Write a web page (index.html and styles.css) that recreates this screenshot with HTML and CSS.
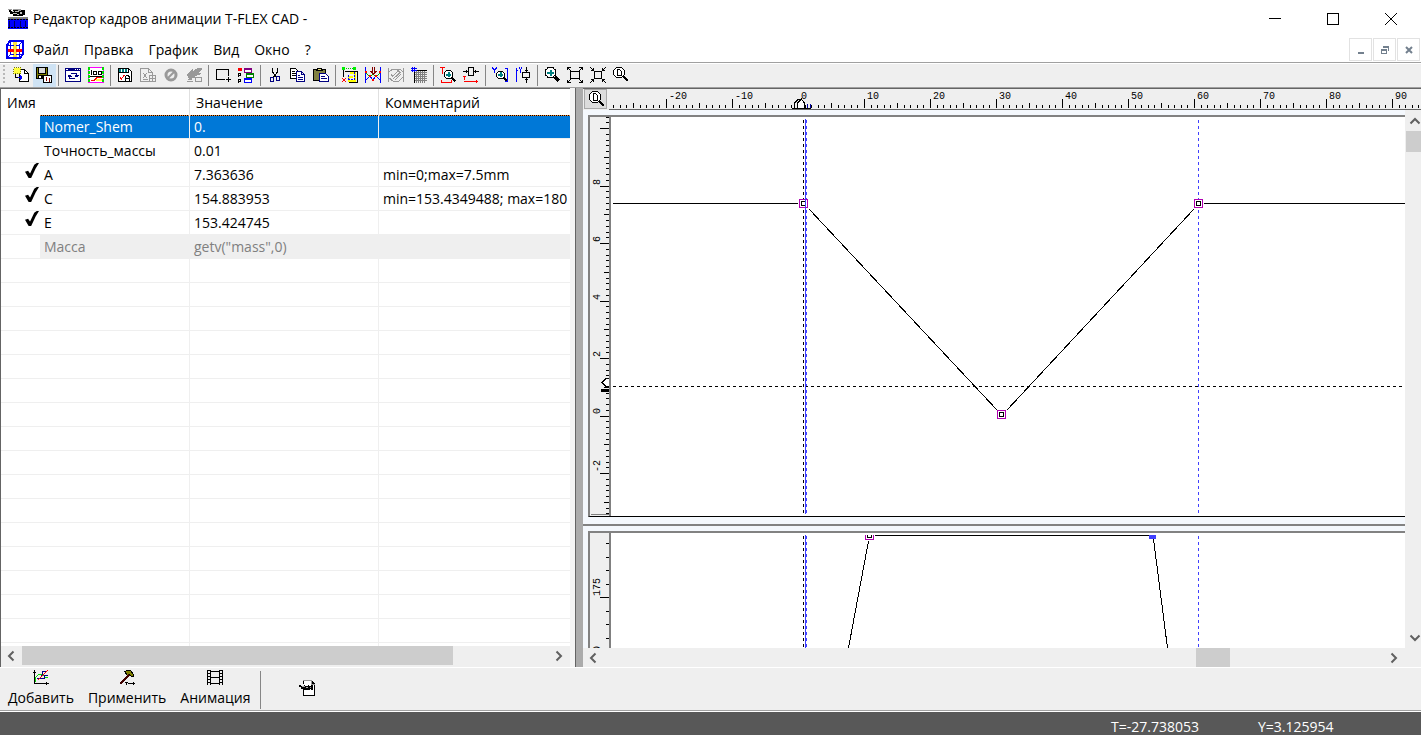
FILE: index.html
```html
<!DOCTYPE html>
<html lang="ru">
<head>
  <meta charset="utf-8">
  <title>Редактор кадров анимации T-FLEX CAD -</title>
  <link rel="stylesheet" href="styles.css">
</head>
<body>
  <header class="titlebar">
    <svg class="app-icon" width="20" height="20" viewBox="0 0 20 20">
      <path fill="#a0a0a0" d="M0 0h4v1h-4zM5 0h8v2h-8z"/>
      <path fill="#000" d="M1 1h2v1h2v-1h5v1h3v-1h4v5h-2v1h-10v-2h-3v-2h-1z"/>
      <path fill="#c0c0c0" d="M4 2h2v1h-2zM7 2h4v1h-4zM12 3h2v2h-2zM5 4h4v1h-4zM9 5h2v1h-2z"/>
      <path fill="#808080" d="M0 8h20v3h-20z"/>
      <path fill="#0000ff" d="M0 10h20v10h-20z"/>
      <path stroke="#000" stroke-dasharray="2 1" d="M0 10.5h20M0 18.5h20"/>
      <path stroke="#000060" d="M1.5 12v6M6.500 12v6M12.500 12v6M17.500 12v6"/>
    </svg>
    <h1>Редактор кадров анимации T-FLEX CAD -</h1>
    <div class="window-controls">
      <button aria-label="Свернуть"><svg width="12" height="12"><path stroke="#000" d="M0 5.5h12"/></svg></button>
      <button aria-label="Развернуть"><svg width="12" height="12"><path fill="none" stroke="#000" d="M.5.5h11v11h-11z"/></svg></button>
      <button aria-label="Закрыть"><svg class="smooth" width="12" height="12"><path stroke="#000" d="M0 0l12 12M12 0l-12 12"/></svg></button>
    </div>
  </header>

  <nav class="menubar">
    <svg class="doc-icon" width="18" height="20" viewBox="0 0 18 20">
      <path fill="#fff" d="M2 2h14v16h-14z"/>
      <path fill="#ffe040" d="M7 0h4v20h-4z"/>
      <path fill="none" stroke="#0000f0" stroke-width="2" d="M4 1h13v13l-3 4h-13v-13z"/>
      <path fill="none" stroke="#0000f0" d="M1 5.500h12.500v12M13 5l3-3M4.500 2v12h12M2 17l3-3"/>
      <path fill="#f00" d="M2 9h14v3h-14z"/>
      <path fill="#ffe040" d="M8 3h2v14h-2z"/>
    </svg>
    <button>Файл</button>
    <button>Правка</button>
    <button>График</button>
    <button>Вид</button>
    <button>Окно</button>
    <button>?</button>
    <div class="child-controls">
      <button aria-label="Свернуть окно"><svg width="10" height="10"><path fill="#73808e" d="M2 7h6v2h-6z"/></svg></button>
      <button aria-label="Восстановить окно"><svg width="10" height="10"><path fill="#73808e" d="M3 1h6v5h-1v-3h-5zM1 4h6v5h-6zM2 6v2h4v-2z" fill-rule="evenodd"/></svg></button>
      <button aria-label="Закрыть окно"><svg class="smooth" width="10" height="10"><path stroke="#73808e" stroke-width="2" d="M2 2l6 6M8 2l-6 6"/></svg></button>
    </div>
  </nav>

  <div class="toolbar" role="toolbar" aria-label="Панель инструментов">
    <span class="grip"></span>
    <button aria-label="Импорт"><svg width="16" height="16">
      <path fill="#fff" stroke="#000" d="M6.500 2.500h5l4 4v8h-9z"/><path fill="none" stroke="#000" d="M11.500 2.500v4h4"/>
      <path fill="#ffff40" d="M1 1h7v6h-7z"/><path fill="none" stroke="#808000" stroke-dasharray="1 1" d="M.5.500h7v6h-7z"/>
      <path fill="none" stroke="#000" d="M2.500 7v3h2"/><path fill="none" stroke="#00f" d="M5 10.500h4M7.500 8v5M8.500 9v3"/></svg></button>
    <button class="active" aria-label="Сохранить"><svg width="16" height="16">
      <path d="M0 0h12v12h-12z"/><path fill="#808000" d="M1 1h1v10h-1zM10 1h1v7h-1zM2 7h8v1h-8z"/><path fill="#d8d8d8" d="M3 1h6v5h-6z"/><path fill="#fff" d="M3 9h2v2h-2z"/>
      <path fill="#fff" stroke="#000" d="M7.500 8.500h8v7h-8z"/><path stroke="#800000" d="M10.500 10v4M13.500 11v4"/></svg></button>
    <i class="sep"></i>
    <button aria-label="Обновить окно"><svg width="16" height="16">
      <path fill="#fff" stroke="#000080" d="M.5 1.500h15v13h-15z"/><path fill="#000080" d="M0 1h16v3h-16z"/><path fill="#fff" d="M1 2h2v1h-2zM10 2h1v1h-1zM12 2h1v1h-1zM14 2h1v1h-1z"/>
      <path fill="none" stroke="#000080" d="M6 6.500h5.500v3M4.500 8v3.500h5.500M9.500 8.500h4M2.500 9.500h4M10 9.500h3M3 8.500h3"/></svg></button>
    <button aria-label="Окно графика"><svg width="16" height="16">
      <path fill="#fff" stroke="#f0f" d="M.5.500h15v15h-15z"/><path stroke="#0d0" stroke-width="2" stroke-dasharray="3 1" d="M1 0v16M15 0v16"/>
      <path fill="none" stroke="#000" d="M3.500 3v5M5.500 4.500h3v3h-3zM10.500 4.500h3v3h-3zM2 9.500h12"/><path fill="#ffff40" d="M8 12h6v2h-6z"/><path fill="none" stroke="#f00" d="M3 13.500h3l3-3h5"/></svg></button>
    <i class="sep"></i>
    <button aria-label="Свойства"><svg width="16" height="16">
      <path fill="#fff" stroke="#000" d="M1.500 1.500h10l3 3v10h-13z"/><path fill="#008080" d="M2 2h8v3h-8z"/><path stroke="#fff" d="M4.500 2v3M7.500 2v3"/>
      <path fill="none" stroke="#000" d="M2 5.500h9v-4M8.500 14v-4l1.500-2h1l1.500 2v4M9 11.500h3"/><path fill="none" stroke="#f00" d="M3 10l1.500 2l3-4"/></svg></button>
    <button disabled aria-label="Новый график"><svg width="16" height="16">
      <path fill="none" stroke="#999" d="M.5 14.500v-13h8l4 4v3M8.500 1.500v4h4M.5 14.500h8M3 6l4 5M7 6l-4 5M3 12.500h5M9 11.500h6M12.500 9v5M9.500 8.500h6v6h-6z"/></svg></button>
    <button disabled aria-label="Отменить"><svg class="smooth" width="16" height="16">
      <circle cx="8" cy="8" r="5" fill="none" stroke="#999" stroke-width="3"/><path stroke="#999" stroke-width="2" d="M4 12l8-8"/></svg></button>
    <button disabled aria-label="Записать"><svg width="16" height="16">
      <path fill="#999" d="M1 7l6-5v2l5-3h4v2l-4 3h3v1l-6 2v2h-3v2h-3v-2h-1v-1z"/><path fill="none" stroke="#999" d="M9.500 10.500h6v4h-6zM1 14.500h6M2 12.500h4"/></svg></button>
    <i class="sep"></i>
    <button aria-label="Рамка"><svg width="16" height="16"><path fill="none" stroke="#000" d="M13.500 9v-6.500h-12v10h8M11 12.500h5M13.500 10v5"/></svg></button>
    <button aria-label="Список окон"><svg width="16" height="16">
      <path fill="#f00" d="M0 1h4v3h-4z"/><path fill="none" stroke="#000" d="M.5 10v-4h2v2h-2M.5 16v-4h2v2h-2"/>
      <path fill="#fff" stroke="#800080" d="M6.500 1.500h7v4h-7z"/><path fill="#fff" stroke="#008000" d="M8.500 6.500h7v4h-7z"/><path fill="#fff" stroke="#00f" d="M6.500 11.500h7v4h-7z"/>
      <path stroke="#800080" d="M6 2.500h8"/><path stroke="#008000" d="M8 7.500h8"/><path stroke="#00f" d="M6 12.500h8"/></svg></button>
    <i class="sep"></i>
    <button aria-label="Вырезать"><svg width="16" height="16">
      <path fill="none" stroke="#000" d="M5.500 1v4l4 5M10.500 1v4l-4 5"/><path fill="none" stroke="#000080" d="M3.500 10.500h3v4h-3zM9.500 9.500h3v4h-3z"/></svg></button>
    <button aria-label="Копировать"><svg width="16" height="16">
      <path fill="#fff" stroke="#000" d="M.5 1.500h5l3 3v7h-8z"/><path stroke="#000" d="M2 4.500h3M2 6.500h5M2 8.500h5"/>
      <path fill="#fff" stroke="#000080" d="M6.500 4.500h5l3 3v7h-8zM11.500 4.500v3h3"/><path stroke="#000080" d="M8 8.500h2M8 10.500h5M8 12.500h5"/></svg></button>
    <button aria-label="Вставить"><svg width="16" height="16">
      <path fill="#808040" stroke="#000" d="M.5 2.500h12v11h-12z"/><path fill="#e8e080" stroke="#000" d="M3.500 3.500h6v-1h-1v-1h-4v1h-1z"/>
      <path fill="#fff" stroke="#000080" d="M6.500 6.500h6l3 3v5h-9z"/><path stroke="#000080" d="M8 9.500h4M8 11.500h6"/></svg></button>
    <i class="sep"></i>
    <button aria-label="Узлы"><svg width="16" height="16">
      <path fill="none" stroke="#0c0" stroke-dasharray="1 1" d="M2 1.500h11"/><path fill="none" stroke="#000" d="M1.500 3v7M3 4.500h12.500v11h-9"/><path fill="none" stroke="#ff0" stroke-width="2" d="M8 6h5v8h-6v-4h4"/>
      <path fill="#0e0" d="M0 0h3v3h-3zM11 0h3v3h-3z"/><path fill="none" stroke="#00f" stroke-dasharray="2 1" d="M12.500 5v7h-6v-5"/>
      <path fill="none" stroke="#f00" d="M0 11l4 4M4 11l-4 4"/></svg></button>
    <button aria-label="Кривые"><svg width="16" height="16">
      <path fill="none" stroke="#0a0" d="M1 6l4 4l3-3l3 3l4-4"/><path fill="none" stroke="#00f" d="M1 13l4-4l3 4l3-4l4 4"/>
      <path stroke="#00f" d="M.5 0v16M15.500 0v16"/><path fill="none" stroke="#800000" d="M7.500 0v5M9.500 0v5M5.500 4l3 3l3-3"/><path fill="#f00" d="M0 4h2v2h-2zM4 8h2v2h-2zM10 8h2v2h-2zM14 4h2v2h-2zM7 12h2v2h-2z"/></svg></button>
    <button disabled aria-label="Сгладить"><svg width="16" height="16">
      <path fill="none" stroke="#999" d="M.5 1v14M15.500 1v14M1 5l4-3h7l3 3M1 11l4 3h6l4-4M4 10l7-7M5 12l8-7M7 13l6-6M3 7l2 3M9 3l4 3"/></svg></button>
    <button aria-label="Сетка"><svg width="16" height="16">
      <path stroke="#808080" d="M5.500 4v12M7.500 4v12M9.500 4v12M11.500 4v12M13.500 4v12M3 5.500h13M3 7.500h13M3 9.500h13M3 11.500h13M3 13.500h13"/>
      <path stroke="#000" d="M5 3.500h11M3.500 5v11"/><path stroke="#00f" d="M0 1.500h6M0 3.500h6M1.500 0v5M3.500 0v5"/></svg></button>
    <i class="sep"></i>
    <button aria-label="Масштаб по T"><svg width="16" height="16">
      <path stroke="#f00" d="M0 .5h5M2.500 0v7M2 15.500h9M1.500 13v3M11.500 13v3"/>
      <path fill="#fff" stroke="#000" d="M6.500 3.500h4l2 2v4l-2 2h-4l-2-2v-4z"/><path stroke="#008080" stroke-width="2" d="M8.500 5v5M6 7.500h5"/><path stroke="#000" stroke-width="2" d="M12 11l3.500 3.500"/></svg></button>
    <button aria-label="Сдвиг по T"><svg width="16" height="16">
      <path fill="none" stroke="#000" d="M0 4.500h5M11 4.500h5M5.500.500h5v8h-5zM3.500 3v3M12.500 3v3"/><path stroke="#f00" d="M0 9.500h3M1.500 9v4M1 14.500h14M13.500 13v3"/></svg></button>
    <i class="sep"></i>
    <button aria-label="Масштаб по Y"><svg width="16" height="16">
      <path fill="none" stroke="#00f" d="M.5 0v1l2 2l2-2v-1M2.500 3v3M13 1.500h2.500v13M13 14.500h3"/>
      <path fill="#fff" stroke="#000" d="M6.500 4.500h4l2 2v3l-2 2h-4l-2-2v-3z"/><path stroke="#008080" stroke-width="2" d="M8.500 5v5M6 7.500h5"/><path stroke="#000" stroke-width="2" d="M12 11l3 3"/></svg></button>
    <button aria-label="Сдвиг по Y"><svg width="16" height="16">
      <path fill="none" stroke="#00f" d="M1.500 1v14M.5 3.500h2M4.500 0v1l1 2l1-2v-1M5.500 3v3"/><path fill="none" stroke="#000" d="M11.500 0v5M11.500 11v5M7.500 5.500h7v5h-7zM10 3.500h3M10 12.500h3"/></svg></button>
    <i class="sep"></i>
    <button aria-label="Увеличить"><svg width="16" height="16">
      <path fill="#fff" stroke="#000" d="M4.500.500h4l3 3v4l-3 3h-4l-3-3v-4z"/><path fill="none" stroke="#000" d="M1.500 2v7M3 .5h7M11.500 2v7M3 10.500h7"/><path stroke="#008080" stroke-width="2" d="M6.500 3v6M3 6h7"/><path stroke="#000" stroke-width="3" d="M11 10l4 4"/></svg></button>
    <button aria-label="Показать всё"><svg width="16" height="16">
      <path fill="none" stroke="#000" d="M3.500 4.500h9v7h-9zM0 .5h4M.5 0v3M12 .5h4M15.500 0v3M0 15.500h4M.5 13v3M12 15.500h4M15.500 13v3M0 0l4 4M16 0l-4 4M0 16l4-4M16 16l-4-4"/></svg></button>
    <button aria-label="Сжать"><svg width="16" height="16">
      <path fill="none" stroke="#000" d="M4.500 4.500h7v7h-7zM0 0l4 4M16 0l-4 4M0 16l4-4M16 16l-4-4M1 3.500h3M3.500 1v3M12 3.500h3M12.500 1v3M1 12.500h3M3.500 12v3M12 12.500h3M12.500 12v3"/></svg></button>
    <button aria-label="Показать страницу"><svg width="16" height="16">
      <path fill="#fff" stroke="#000" d="M3.500.500h5l3 3v4l-3 3h-5l-3-3v-4z"/><path fill="none" stroke="#000" d="M4.500 2.500h2l2 2v4h-4z"/><path stroke="#000" stroke-width="2" d="M10 9l5 5"/></svg></button>
  </div>

  <main class="workspace">
    <section class="variables">
      <div class="grid-scroll">
        <table>
          <colgroup><col class="col-mark"><col class="col-name"><col class="col-value"><col></colgroup>
          <thead>
            <tr><th colspan="2">Имя</th><th>Значение</th><th>Комментарий</th></tr>
          </thead>
          <tbody>
            <tr class="selected"><td></td><td>Nomer_Shem</td><td>0.</td><td></td></tr>
            <tr><td></td><td>Точность_массы</td><td>0.01</td><td></td></tr>
            <tr><td><input type="checkbox" id="var-a" checked></td><td><label for="var-a">A</label></td><td>7.363636</td><td>min=0;max=7.5mm</td></tr>
            <tr><td><input type="checkbox" id="var-c" checked></td><td><label for="var-c">C</label></td><td>154.883953</td><td>min=153.4349488; max=180</td></tr>
            <tr><td><input type="checkbox" id="var-e" checked></td><td><label for="var-e">E</label></td><td>153.424745</td><td></td></tr>
            <tr class="readonly"><td></td><td>Масса</td><td>getv("mass",0)</td><td></td></tr>
            <tr><td></td><td></td><td></td><td></td></tr>
            <tr><td></td><td></td><td></td><td></td></tr>
            <tr><td></td><td></td><td></td><td></td></tr>
            <tr><td></td><td></td><td></td><td></td></tr>
            <tr><td></td><td></td><td></td><td></td></tr>
            <tr><td></td><td></td><td></td><td></td></tr>
            <tr><td></td><td></td><td></td><td></td></tr>
            <tr><td></td><td></td><td></td><td></td></tr>
            <tr><td></td><td></td><td></td><td></td></tr>
            <tr><td></td><td></td><td></td><td></td></tr>
            <tr><td></td><td></td><td></td><td></td></tr>
            <tr><td></td><td></td><td></td><td></td></tr>
            <tr><td></td><td></td><td></td><td></td></tr>
            <tr><td></td><td></td><td></td><td></td></tr>
            <tr><td></td><td></td><td></td><td></td></tr>
            <tr><td></td><td></td><td></td><td></td></tr>
            <tr class="filler"><td></td><td></td><td></td><td></td></tr>
          </tbody>
        </table>
      </div>
      <div class="scroll-x">
        <button aria-label="Влево"><svg class="smooth" width="8" height="12"><path class="arrow" d="M6.500 1.500l-4.500 4.500l4.500 4.500"/></svg></button>
        <div class="track"><div class="thumb"></div></div>
        <button aria-label="Вправо"><svg class="smooth" width="8" height="12"><path class="arrow" d="M1.500 1.500l4.500 4.500l-4.500 4.500"/></svg></button>
      </div>
    </section>

    <div class="splitter"></div>

    <section class="graphs">
      <div class="time-row">
        <button class="fit" aria-label="Показать всё"><svg width="18" height="18">
          <path fill="#fff" stroke="#000" d="M5.500 1.500h5l3 3v5l-3 3h-5l-3-3v-5z"/><path fill="none" stroke="#000" d="M6.500 3.500h2l2 2v5h-4z"/><path stroke="#000" stroke-width="2" d="M12 11l5 5"/></svg></button>
        <svg class="time-ruler">
          <defs>
            <pattern id="time-ticks" x="57" y="0" width="66" height="19" patternUnits="userSpaceOnUse">
              <path d="M0 10h1v9h-1zM33 14h1v5h-1zM7 16h1v3h-1zM13 16h1v3h-1zM20 16h1v3h-1zM26 16h1v3h-1zM40 16h1v3h-1zM46 16h1v3h-1zM53 16h1v3h-1zM59 16h1v3h-1z"/>
            </pattern>
          </defs>
          <rect width="100%" height="19" fill="url(#time-ticks)"/>
          <g class="ruler-text">
            <text x="60" y="10">-20</text>
            <text x="126" y="10">-10</text>
            <text x="192" y="10">0</text>
            <text x="258" y="10">10</text>
            <text x="324" y="10">20</text>
            <text x="390" y="10">30</text>
            <text x="456" y="10">40</text>
            <text x="522" y="10">50</text>
            <text x="588" y="10">60</text>
            <text x="654" y="10">70</text>
            <text x="720" y="10">80</text>
            <text x="786" y="10">90</text>
          </g>
          <path fill="#efefef" stroke="#000" d="M185.500 19v-5l4-4h2l4 4v5z"/>
          <path fill="#fff" stroke="#000" d="M188.500 20v-6l4-4l3 4v6z"/>
          <path stroke="#0000a0" d="M198.500 15v4M201.500 15v4"/>
          <path stroke="#000" d="M183 19.500h19"/>
        </svg>
      </div>
      <div class="graph-body">
        <div class="graph-list">
          <div class="graph graph-a">
            <svg class="value-ruler">
              <defs>
                <pattern id="value-ticks" x="0" y="11" width="19" height="115" patternUnits="userSpaceOnUse">
                  <path d="M10 0h9v1h-9zM10 58h9v1h-9zM14 29h5v1h-5zM14 86h5v1h-5z"/>
                  <path d="M16 6h3v1h-3zM16 12h3v1h-3zM16 17h3v1h-3zM16 23h3v1h-3zM16 35h3v1h-3zM16 40h3v1h-3zM16 46h3v1h-3zM16 52h3v1h-3zM16 63h3v1h-3zM16 69h3v1h-3zM16 75h3v1h-3zM16 81h3v1h-3zM16 92h3v1h-3zM16 98h3v1h-3zM16 104h3v1h-3zM16 109h3v1h-3z"/>
                </pattern>
              </defs>
              <rect width="19" height="397" fill="url(#value-ticks)"/>
              <path fill="none" stroke="#808080" d="M1 397.500h18"/>
              <g class="ruler-text">
                <text transform="translate(10 68) rotate(-90)">8</text>
                <text transform="translate(10 125) rotate(-90)">6</text>
                <text transform="translate(10 183) rotate(-90)">4</text>
                <text transform="translate(10 240) rotate(-90)">2</text>
                <text transform="translate(10 297) rotate(-90)">0</text>
                <text transform="translate(10 355) rotate(-90)">-2</text>
              </g>
              <path fill="#fff" stroke="#000" d="M19 261.500h-3l-4 4l4 4h3"/>
              <path d="M11 272h10v3h-10z"/>
            </svg>
            <svg class="plot">
              <path class="cursor" d="M192.500 3v394"/>
              <path class="frame dashed" d="M195.500 3v394M587.500 3v394"/>
              <line class="cursor" x1="2" y1="269.500" x2="100%" y2="269.500"/>
              <path class="curve" d="M2 86.500h185M198 92l188 201M396 293l187-201"/>
              <line class="curve" x1="593" y1="86.500" x2="100%" y2="86.500"/>
              <path class="node" d="M188.500 82.500h8v8h-8zM386.500 293.500h8v8h-8zM583.500 82.500h8v8h-8z"/>
              <path class="node-core" d="M190.500 84.500h4v4h-4zM388.500 295.500h4v4h-4zM585.500 84.500h4v4h-4z"/>
              <path class="frame" d="M194.500 2v395"/>
            </svg>
          </div>
          <div class="graph graph-c">
            <svg class="value-ruler">
              <defs>
                <pattern id="fine-ticks" x="0" y="10" width="19" height="27" patternUnits="userSpaceOnUse">
                  <path d="M16 0h3v1h-3zM16 14h3v1h-3z"/>
                </pattern>
              </defs>
              <rect width="19" height="100%" fill="url(#fine-ticks)"/>
              <path d="M10 64h9v1h-9z"/>
              <g class="ruler-text">
                <text transform="translate(10 63) rotate(-90)">175</text>
                <text transform="translate(10 131) rotate(-90)">170</text>
              </g>
            </svg>
            <svg class="plot">
              <path class="cursor" d="M192.500 3v112"/>
              <path class="frame dashed" d="M195.500 3v112M587.500 3v112"/>
              <path class="frame" d="M194.500 2v113"/>
              <path class="curve" d="M264 2.500h274M257.500 8l-20 107M542.500 6l14 109"/>
              <path class="node" d="M254.500 2v4.500h8v-4.500"/>
              <path class="node-core" d="M256.500 2v2.500h4v-2.500"/>
              <path fill="#4040ff" d="M538 2h7v4h-7z"/>
            </svg>
          </div>
        </div>
        <div class="scroll-y">
          <button aria-label="Вверх"><svg class="smooth" width="12" height="8"><path class="arrow" d="M1.500 6.500l4.500-4.500l4.500 4.500"/></svg></button>
          <div class="track"><div class="thumb"></div></div>
          <button aria-label="Вниз"><svg class="smooth" width="12" height="8"><path class="arrow" d="M1.500 1.500l4.500 4.500l4.500-4.500"/></svg></button>
        </div>
      </div>
      <div class="scroll-x">
        <button aria-label="Влево"><svg class="smooth" width="8" height="12"><path class="arrow" d="M6.500 1.500l-4.500 4.500l4.500 4.500"/></svg></button>
        <div class="track"><div class="thumb"></div></div>
        <button aria-label="Вправо"><svg class="smooth" width="8" height="12"><path class="arrow" d="M1.500 1.500l4.500 4.500l-4.500 4.500"/></svg></button>
      </div>
    </section>
  </main>

  <div class="actions">
    <button><svg width="16" height="16">
      <path fill="none" stroke="#000" d="M1.500 0v13.500h14M0 2.500h3M13.500 12v3"/><path fill="none" stroke="#0d0" d="M2 12l1-5l3-3h3l3 3h3"/>
      <path fill="none" stroke="#000080" d="M4 8.500h3l2-3l1-4h4M8 8l3 1l1-4h3"/><path stroke="#f00" d="M5 10l10-10"/></svg>Добавить</button>
    <button><svg width="16" height="16">
      <path fill="#808000" stroke="#000" d="M5.500 1.500l3-1h3l3 4v2h-2l-2-2l-2 1z"/><path stroke="#400000" stroke-width="2" d="M1 14l9-9"/>
      <path fill="none" stroke="#000" d="M6 12.500h3M7.500 12v3M9 13.500h7M14.500 12v3"/></svg>Применить</button>
    <button><svg width="16" height="16">
      <path fill="none" stroke="#000" d="M.5 0v15M3.500 0v15M12.500 0v15M15.500 0v15M3 1.500h10M3 7.500h10M3 13.500h10"/>
      <path stroke="#000" stroke-dasharray="1 2" stroke-width="2" d="M2 0v15M14 0v15"/></svg>Анимация</button>
    <i class="divider"></i>
    <button class="record" aria-label="Запись анимации"><svg width="16" height="16">
      <path fill="#fff" stroke="#000" d="M4.500 9v6.500h11v-12l-3-3h-8v3"/><path stroke="#999" d="M4 .5h9M12.500 1v3h3"/>
      <path d="M0 5h2v1h3v-1h1v1h3v-1h1v1h2v-1h2v5h-2v-1h-1v1h-6v-1h-3v-2h-2z"/><path fill="#aaa" d="M3 6h3v1h-3zM7 7h2v1h-2zM11 7h1v1h-1z"/></svg></button>
  </div>

  <footer class="statusbar">
    <span class="coord-t">T=-27.738053</span>
    <span class="coord-y">Y=3.125954</span>
  </footer>
</body>
</html>
```
FILE: styles.css
```css
* {
  box-sizing: border-box;
}

body {
  margin: 0;
  height: 100vh;
  display: flex;
  flex-direction: column;
  overflow: hidden;
  background: #efefef;
  color: #000;
  font-family: "Open Sans", "Noto Sans", sans-serif;
  font-size: 14px;
  line-height: 20px;
}

button {
  display: flex;
  align-items: center;
  justify-content: center;
  padding: 0;
  border: none;
  background: none;
  color: inherit;
  font: inherit;
}

svg {
  display: block;
  flex: none;
  shape-rendering: crispEdges;
}

.smooth {
  shape-rendering: auto;
}

/* Title bar and menu */
.titlebar {
  display: flex;
  align-items: center;
  height: 37px;
  padding: 0 1px 0 8px;
  background: #fff;
}

.titlebar h1 {
  margin: 0 0 0 5px;
  font-size: 14px;
  font-weight: 400;
}

.window-controls {
  display: flex;
  align-self: stretch;
  margin-left: auto;
}

.window-controls button {
  width: 58px;
}

.menubar {
  display: flex;
  align-items: center;
  gap: 1px;
  height: 25px;
  padding: 0 1px 0 6px;
  background: #fff;
}

.menubar > button {
  padding: 0 7px;
}

.doc-icon {
  margin-right: 1px;
}

.child-controls {
  display: flex;
  gap: 1px;
  margin-left: auto;
}

.child-controls button {
  width: 23px;
  height: 23px;
  border: 1px solid #e2e2e2;
}

/* Toolbar */
.toolbar {
  display: flex;
  align-items: center;
  height: 26px;
  border-top: 1px solid #a0a0a0;
  border-bottom: 1px solid #a0a0a0;
  box-shadow: inset 0 1px #fff;
}

.toolbar button {
  width: 23px;
  height: 23px;
  padding-right: 1px;
}

.toolbar .active {
  background: #cfe3f4;
}

.grip {
  width: 2px;
  height: 20px;
  margin: 0 5px 0 3px;
  background: repeating-linear-gradient(#b8b8b8 0 2px, #efefef 2px 4px);
}

.sep {
  width: 1px;
  height: 21px;
  margin: 0 3px 0 2px;
  background: #868686;
}

/* Workspace */
.workspace {
  display: flex;
  flex: 1;
  min-height: 0;
}

.variables {
  display: flex;
  flex-direction: column;
  width: 570px;
  border: solid #646464;
  border-width: 1px 0 0 1px;
}

.grid-scroll {
  flex: 1;
  min-height: 0;
  overflow: hidden;
  background: #fff;
}

table {
  width: 100%;
  table-layout: fixed;
  border-collapse: separate;
  border-spacing: 0;
}

.col-mark {
  width: 39px;
}

.col-name {
  width: 150px;
}

.col-value {
  width: 189px;
}

th,
td {
  padding: 1px 0 0 4px;
  border-right: 1px solid #efefef;
  text-align: left;
  font-weight: 400;
  white-space: nowrap;
  overflow: hidden;
}

th {
  height: 26px;
  padding-left: 6px;
  border-color: #e0e0e0;
}

td {
  height: 24px;
  border-bottom: 1px solid #efefef;
}

td:first-child {
  padding: 0;
  border-right: none;
}

th:last-child,
td:last-child {
  border-right: none;
}

.selected td:not(:first-child) {
  background: repeating-linear-gradient(90deg, #ff8728 0 1px, #000 1px 2px) 0 0 / 100% 1px no-repeat #0078d7;
  color: #fff;
}

.readonly td:not(:first-child) {
  background: #efefef;
  color: #808080;
}

.filler td {
  border-bottom: none;
}

td input {
  appearance: none;
  display: block;
  width: 14px;
  height: 15px;
  margin: 0 0 8px 24px;
}

td input:checked {
  background: #000;
  clip-path: polygon(0 58%, 22% 52%, 36% 70%, 66% 12%, 84% 0, 100% 0, 76% 36%, 44% 100%, 26% 100%);
}

.splitter {
  width: 13px;
  border-left: 5px solid #f4f4f4;
  box-shadow: inset 1px 0 #646464;
  background: #ababab;
}

/* Scrollbars */
.scroll-x {
  display: flex;
  height: 21px;
}

.scroll-x button {
  width: 21px;
  height: 19px;
  padding-right: 2px;
}

.track {
  flex: 1;
}

.thumb {
  background: #cdcdcd;
}

.scroll-x .thumb {
  width: 431px;
  height: 19px;
}

.arrow {
  fill: none;
  stroke: #606060;
  stroke-width: 2;
}

.scroll-y {
  display: flex;
  flex-direction: column;
  width: 16px;
  background: #efefef;
}

.scroll-y button {
  height: 21px;
  padding-left: 4px;
}

.scroll-y .thumb {
  height: 21px;
  margin-left: 1px;
}

/* Graphs */
.graphs {
  display: flex;
  flex: 1;
  flex-direction: column;
  min-width: 0;
  border-top: 1px solid #646464;
}

.time-row {
  display: flex;
  height: 21px;
}

.fit {
  width: 23px;
  height: 20px;
  margin: 0 2px 0 1px;
  border: 1px solid #a8a8a8;
  background: #dcdcdc;
}

.time-ruler {
  flex: 1;
  min-width: 0;
  height: 21px;
  border-bottom: 1px solid #646464;
}

.ruler-text {
  font-family: "Liberation Mono", "Courier New", monospace;
  font-size: 10px;
}

.graph-body {
  display: flex;
  flex: 1;
  min-height: 0;
}

.graph-list {
  display: flex;
  flex: 1;
  flex-direction: column;
  min-width: 0;
  background: #f4f8fd;
}

.graph {
  display: flex;
  min-height: 0;
  margin-left: 5px;
  border: solid #828282;
  border-width: 2px 0 0 2px;
  background: #fff;
}

.graph-a {
  flex: 0 0 402px;
  margin-top: 5px;
  border-bottom: 1px solid #000;
}

.graph-c {
  position: relative;
  flex: 1;
  margin-top: 14px;
}

.graph-c::before {
  content: "";
  position: absolute;
  top: -9px;
  left: -7px;
  right: 0;
  height: 2px;
  background: #828282;
}

.value-ruler {
  width: 21px;
  height: 100%;
  border-right: 2px solid #808080;
  background: #efefef;
}

.plot {
  flex: 1;
  min-width: 0;
  height: 100%;
}

.curve,
.cursor {
  fill: none;
  stroke: #000;
}

.cursor,
.dashed {
  stroke-dasharray: 3 3;
}

.frame {
  fill: none;
  stroke: #4040ff;
}

.node {
  fill: #fff;
  stroke: #b000b0;
}

.node-core {
  fill: #fff;
  stroke: #000;
}

.graphs .scroll-x {
  height: 19px;
  padding-right: 16px;
}

.graphs .scroll-x .thumb {
  width: 34px;
  margin-left: auto;
  margin-right: 154px;
}

/* Bottom actions */
.actions {
  display: flex;
  height: 44px;
  padding-left: 1px;
  border-top: 1px solid #fff;
  border-bottom: 1px solid #a0a0a0;
}

.actions button {
  flex-direction: column;
  justify-content: flex-start;
  gap: 2px;
  padding: 2px 7px 0;
}

.divider {
  width: 1px;
  height: 38px;
  margin: 3px 38px 0 3px;
  background: #868686;
}

.actions .record {
  padding: 12px 0 0;
}

.statusbar {
  display: flex;
  flex: none;
  justify-content: flex-end;
  height: 24px;
  padding-top: 5px;
  border-top: 1px solid #fff;
  background: #585858;
  color: #fff;
}

.coord-t {
  width: 147px;
}

.coord-y {
  width: 163px;
}
```
